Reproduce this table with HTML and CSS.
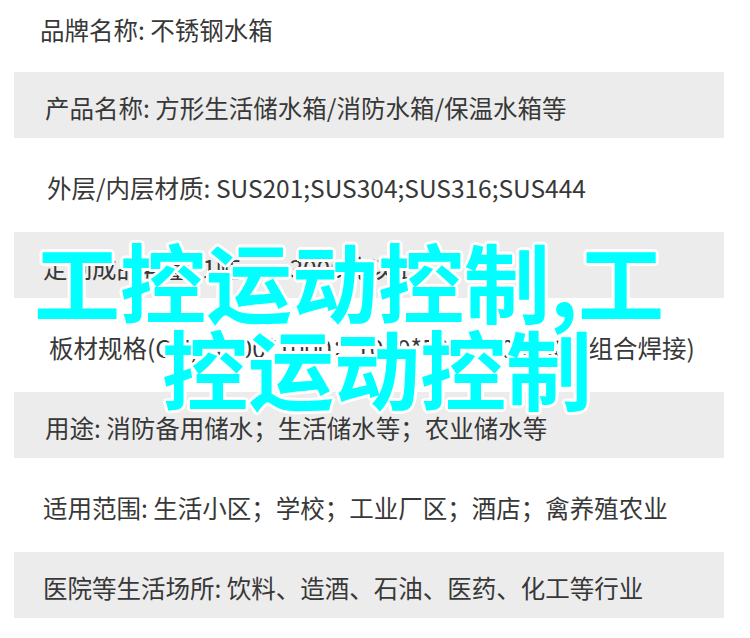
FILE: index.html
```html
<!DOCTYPE html>
<html lang="zh-CN">
<head>
<meta charset="utf-8">
<title>不锈钢水箱</title>
<link rel="stylesheet" href="styles.css">
</head>
<body>
<div class="page">
  <ul class="specs">
    <li class="row row-first shift-40">品牌名称: 不锈钢水箱</li>
    <li class="row row-gray shift-45">产品名称: 方形生活储水箱/消防水箱/保温水箱等</li>
    <li class="row shift-47">外层/内层材质: SUS201;SUS304;SUS316;SUS444</li>
    <li class="row row-gray shift-43">定制成品容量: 1吨——3000吨以上</li>
    <li class="row shift-49">板材规格(CM): 1000*1000；1000*500；500*500(组合焊接)</li>
    <li class="row row-gray shift-45">用途: 消防备用储水；生活储水等；农业储水等</li>
    <li class="row shift-43">适用范围: 生活小区；学校；工业厂区；酒店；禽养殖农业</li>
    <li class="row row-gray shift-43">医院等生活场所: 饮料、造酒、石油、医药、化工等行业</li>
  </ul>
  <div class="overlay">
    <div class="overlay-line line-one">工控运动控制,工</div>
    <div class="overlay-line line-two">控运动控制</div>
  </div>
</div>
</body>
</html>
```
FILE: styles.css
```css
html, body {
  margin: 0;
  padding: 0;
  background: #ffffff;
}

.page {
  position: relative;
  width: 750px;
  height: 638px;
  overflow: hidden;
  font-family: "Noto Sans CJK SC", "Noto Sans", sans-serif;
}

.specs {
  list-style: none;
  margin: 0;
  padding: 0 26px 0 14px;
  display: flex;
  flex-direction: column;
  gap: 14px;
}

.row {
  height: 66px;
  display: flex;
  align-items: center;
  padding-top: 5px;
  box-sizing: border-box;
  font-size: 24.5px;
  color: #383838;
  white-space: nowrap;
}

.row-first {
  height: 58px;
  padding-top: 0;
}

.row-gray {
  background: #ececec;
}

.shift-40 { padding-left: 26px; }
.shift-43 { padding-left: 29px; }
.shift-45 { padding-left: 31px; }
.shift-47 { padding-left: 33px; }
.shift-49 { padding-left: 35px; }

.overlay {
  position: absolute;
  left: 0;
  top: 236px;
  width: 750px;
  font-family: "Noto Sans CJK SC", sans-serif;
  font-weight: 700;
  font-size: 86px;
  line-height: 87px;
  color: #00ffff;
  white-space: nowrap;
  text-shadow:
    3px 0 0 #fff, -3px 0 0 #fff, 0 3px 0 #fff, 0 -3px 0 #fff,
    2px 2px 0 #fff, -2px 2px 0 #fff, 2px -2px 0 #fff, -2px -2px 0 #fff;
}

.line-one {
  padding-left: 34px;
}

.line-two {
  padding-left: 162px;
}
```
